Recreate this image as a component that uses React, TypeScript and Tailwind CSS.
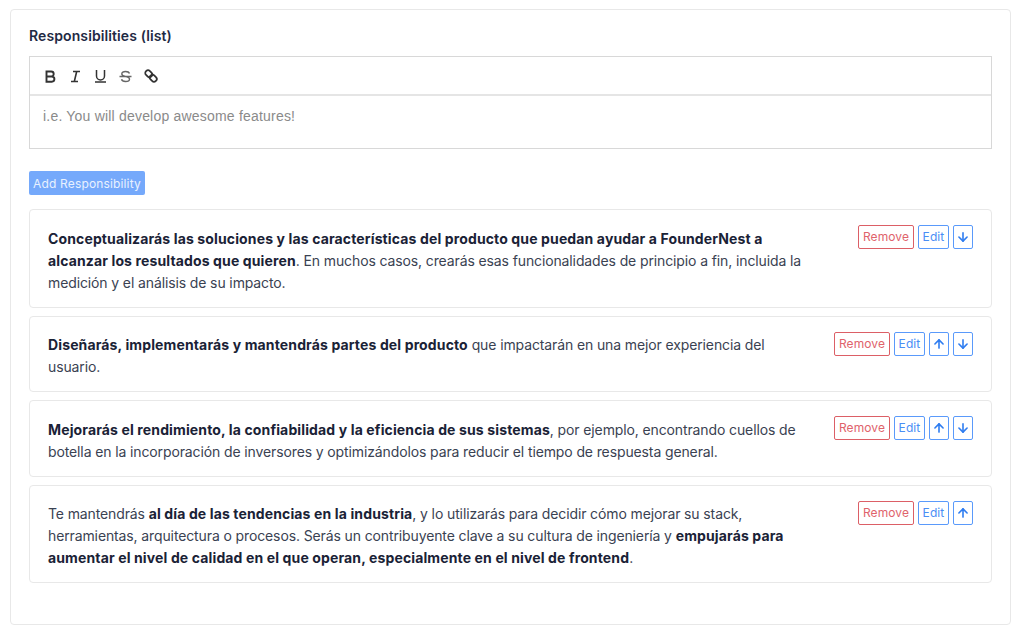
import { ArrowDown, ArrowUp } from "lucide-react";
import type { ReactNode } from "react";

type Item = {
  id: number;
  body: ReactNode;
  up: boolean;
  down: boolean;
};

const boldClass = "font-bold tracking-[0.13px] text-[#1a2236]";

const items: Item[] = [
  {
    id: 1,
    up: false,
    down: true,
    body: (
      <>
        <strong className={boldClass}>
          Conceptualizarás las soluciones y las características del producto que puedan ayudar a FounderNest a alcanzar
          los resultados que quieren
        </strong>
        . En muchos casos, crearás esas funcionalidades de principio a fin, incluida la medición y el análisis de su
        impacto.
      </>
    ),
  },
  {
    id: 2,
    up: true,
    down: true,
    body: (
      <>
        <strong className={boldClass}>Diseñarás, implementarás y mantendrás partes del producto</strong> que impactarán
        en una mejor experiencia del usuario.
      </>
    ),
  },
  {
    id: 3,
    up: true,
    down: true,
    body: (
      <>
        <strong className={boldClass}>Mejorarás el rendimiento, la confiabilidad y la eficiencia de sus sistemas</strong>
        , por ejemplo, encontrando cuellos de botella en la incorporación de inversores y optimizándolos para reducir el
        tiempo de respuesta general.
      </>
    ),
  },
  {
    id: 4,
    up: true,
    down: false,
    body: (
      <>
        Te mantendrás <strong className={boldClass}>al día de las tendencias en la industria</strong>, y lo utilizarás
        para decidir cómo mejorar su stack, herramientas, arquitectura o procesos. Serás un contribuyente clave a su
        cultura de ingeniería y{" "}
        <strong className={boldClass}>
          empujarás para aumentar el nivel de calidad en el que operan, especialmente en el nivel de frontend
        </strong>
        .
      </>
    ),
  },
];

function Toolbar() {
  return (
    <div className="flex h-[39px] items-center gap-[12px] border-b-2 border-[#e5e5e5] pl-[14px] pt-px text-[#333333]">
      <svg width="13" height="13" viewBox="0 0 13 13" fill="none" stroke="currentColor" strokeWidth="1.9">
        <path d="M2.500 1.500h4.700a2.500 2.500 0 0 1 0 5H2.500zM2.500 6.500h5.300a2.600 2.600 0 0 1 0 5.200H2.500z" />
      </svg>
      <svg width="13" height="13" viewBox="0 0 13 13" fill="none" stroke="currentColor" strokeWidth="1.6">
        <path d="M4 1.500h7M2 11.500h7M7.700 1.500 5.300 11.500" />
      </svg>
      <svg width="13" height="14" viewBox="0 0 13 14" fill="none" stroke="currentColor" strokeWidth="1.5">
        <path d="M2.500 1v6a4 4 0 0 0 8 0V1M1 13h11" />
      </svg>
      <svg width="13" height="13" viewBox="0 0 13 13" fill="none" stroke="currentColor" strokeWidth="1.400" className="opacity-75">
        <path d="M10.500 3.500C10 2 8.500 1.500 6.500 1.500 4.300 1.500 2.800 2.500 2.800 4c0 1.500 1.500 2.100 3.700 2.500 2.400.4 4 1 4 2.700 0 1.500-1.600 2.300-4 2.300-2.200 0-3.600-.8-4-2.200M.5 6.500h12" />
      </svg>
      <svg width="14" height="14" viewBox="0 0 14 14" fill="none" stroke="currentColor" strokeWidth="1.800">
        <rect x="1" y="2" width="7.500" height="5.500" rx="2.700" transform="rotate(45 4.750 4.750)" />
        <rect x="5.500" y="6.500" width="7.500" height="5.500" rx="2.700" transform="rotate(45 9.250 9.250)" />
      </svg>
    </div>
  );
}

function ItemCard({ item }: { item: Item }) {
  return (
    <div className="flex items-start justify-between rounded border border-[#e8e8e8] pb-[13.1px] pl-[18px] pr-[18px] pt-[17.5px]">
      <p className="w-[760px] text-[14px] leading-[22px] tracking-[-0.12px] text-[#3a4252]">{item.body}</p>
      <div className="mt-[-2.5px] flex gap-1">
        <button className="flex h-[24px] w-[56px] items-center justify-center rounded-[2px] border border-[#dc5f66] text-[12px] tracking-[0.1px] text-[#e0636b]">
          Remove
        </button>
        <button className="flex h-[24px] w-[31px] items-center justify-center rounded-[2px] border border-[#5a9afb] text-[12px] tracking-[0.1px] text-[#4a8ef5]">
          Edit
        </button>
        {item.up && (
          <button className="flex h-[24px] w-[20px] items-center justify-center rounded-[2px] border border-[#5a9afb] text-[#2f7df0]">
            <ArrowUp size={14} strokeWidth={2.75} />
          </button>
        )}
        {item.down && (
          <button className="flex h-[24px] w-[20px] items-center justify-center rounded-[2px] border border-[#5a9afb] text-[#2f7df0]">
            <ArrowDown size={14} strokeWidth={2.75} />
          </button>
        )}
      </div>
    </div>
  );
}

export default function App() {
  return (
    <div className="h-[637px] overflow-hidden bg-white pl-[10px] pr-[13px] pt-[9px] font-['Inter',sans-serif]">
      <div className="h-[616px] rounded border border-[#e8e8e8] px-[18px] pt-[17px]">
        <label className="block text-[14px] font-semibold leading-[18px] tracking-[0.1px] text-[#1f2a44]">
          Responsibilities (list)
        </label>
        <div className="mt-[11px] h-[93px] border border-[#d8d8d8]">
          <Toolbar />
          <div className="pl-[13px] pt-[11px] font-['Liberation_Sans',sans-serif] text-[14px] leading-[19px] tracking-[0.2px] text-[#8a8a8a]">
            i.e. You will develop awesome features!
          </div>
        </div>
        <button className="mt-[22px] flex h-[24px] w-[116px] items-center justify-center rounded-[2px] bg-[#75a9fb] pt-px text-[12px] tracking-[0.15px] text-[#e8f1ff]">
          Add Responsibility
        </button>
        <div className="mt-[14px] flex flex-col gap-2">
          {items.map((item) => (
            <ItemCard key={item.id} item={item} />
          ))}
        </div>
      </div>
    </div>
  );
}
